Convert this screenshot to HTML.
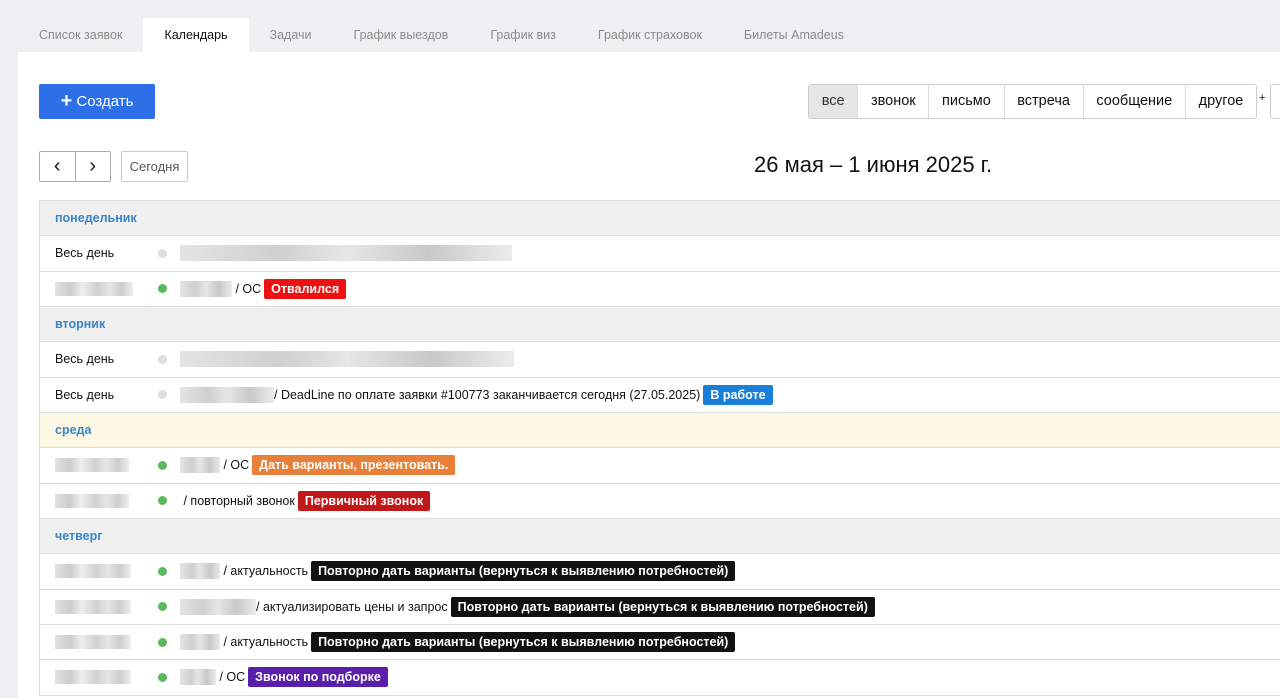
<!DOCTYPE html>
<html><head><meta charset="utf-8"><style>
*{box-sizing:border-box;margin:0;padding:0}
body{width:1280px;height:698px;overflow:hidden;background:#f0f0f3;font-family:"Liberation Sans",Arial,sans-serif;font-size:12.5px;color:#111;position:relative}
.tabs{position:absolute;top:18px;left:18px;height:34px;display:flex}
.tab{padding:0 21px;line-height:34px;color:#8a8a8a;font-size:12.5px}
.tab.act{background:#fff;color:#111;padding:0 21px}
.main{position:absolute;left:18px;top:52px;right:0;bottom:0;background:#fff}
.create{position:absolute;left:39px;top:84px;width:116px;height:35px;background:#2d6fe8;border-radius:2px;color:#fff;font-size:15px;line-height:35px;text-align:center}
.create b{font-size:20px;font-weight:bold;vertical-align:-1px}
.seg{position:absolute;left:808px;top:84px;width:449px;height:35px;display:flex;border:1px solid #ccc;border-radius:3px;overflow:hidden}
.seg div{flex:auto;text-align:center;line-height:33px;font-size:14.5px;border-left:1px solid #ddd;color:#111}
.seg div:first-child{border-left:none;background:#e6e6e6;color:#333}
.plus{position:absolute;left:1259px;top:92px;font-size:11px}
.box2{position:absolute;left:1270px;top:84px;width:20px;height:35px;border:1px solid #ccc;border-radius:3px}
.nav{position:absolute;left:39px;top:151px;width:72px;height:31px;border:1px solid #aaa;border-radius:2px;display:flex}
.nav div{flex:1;text-align:center;line-height:28px;font-size:20px}
.nav div+div{border-left:1px solid #aaa}
.today{position:absolute;left:121px;top:151px;width:67px;height:31px;border:1px solid #ccc;border-radius:2px;line-height:29px;text-align:center;color:#555;font-size:13px}
.title{position:absolute;left:754px;top:152px;font-size:22px;color:#111}
.tbl{position:absolute;left:39px;top:200px;right:0;border-left:1px solid #ddd;border-top:1px solid #ddd}
.r{height:35.33px;border-bottom:1px solid #ddd;position:relative;display:flex;align-items:center}
.h{background:#f0f0f0;color:#3a85c8;font-weight:bold;padding-left:15px}
.h.y{background:#fdf8e3}
.t{position:absolute;left:15px}
.dot{position:absolute;left:118px;width:9px;height:9px;border-radius:50%;background:#ddd}
.dot.g{background:#5cb85c}
.c{position:absolute;left:140px;display:flex;align-items:center;white-space:nowrap}
.bl{display:inline-block;height:16px;background:linear-gradient(90deg,#e4e4e4,#cfcfcf 30%,#e6e6e6 50%,#c8c8c8 75%,#ececec)}
.tb{display:inline-block;height:14px;width:78px;background:linear-gradient(90deg,#e2e2e2,#cccccc 20%,#eee 35%,#d0d0d0 55%,#e6e6e6 70%,#cdcdcd 85%,#eee)}
.lb{color:#fff;font-weight:bold;font-size:12.5px;padding:0 7px;height:20px;line-height:20px;border-radius:2px;margin-left:3px}
</style></head><body>
<div class="tabs"><div class="tab">Список заявок</div><div class="tab act">Календарь</div><div class="tab">Задачи</div><div class="tab">График выездов</div><div class="tab">График виз</div><div class="tab">График страховок</div><div class="tab">Билеты Amadeus</div></div>
<div class="main"></div>
<div class="create"><b>+</b> Создать</div>
<div class="seg"><div>все</div><div>звонок</div><div>письмо</div><div>встреча</div><div>сообщение</div><div>другое</div></div>
<div class="plus">+</div><div class="box2"></div>
<div class="nav"><div>&#8249;</div><div>&#8250;</div></div>
<div class="today">Сегодня</div>
<div class="title">26 мая – 1 июня 2025 г.</div>
<div class="tbl">
<div class="r h">понедельник</div>
<div class="r"><span class="t">Весь день</span><span class="dot"></span><span class="c"><span class="bl" style="width:332px"></span></span></div>
<div class="r"><span class="t tb"></span><span class="dot g"></span><span class="c"><span class="bl" style="width:52px"></span>&nbsp;/ ОС <span class="lb" style="background:#ee1111">Отвалился</span></span></div>
<div class="r h">вторник</div>
<div class="r"><span class="t">Весь день</span><span class="dot"></span><span class="c"><span class="bl" style="width:334px"></span></span></div>
<div class="r"><span class="t">Весь день</span><span class="dot"></span><span class="c"><span class="bl" style="width:94px"></span>/ DeadLine по оплате заявки #100773 заканчивается сегодня (27.05.2025) <span class="lb" style="background:#1a7fd9">В работе</span></span></div>
<div class="r h y">среда</div>
<div class="r"><span class="t tb" style="width:74px"></span><span class="dot g"></span><span class="c"><span class="bl" style="width:40px"></span>&nbsp;/ ОС <span class="lb" style="background:#e8803a">Дать варианты, презентовать.</span></span></div>
<div class="r"><span class="t tb" style="width:74px"></span><span class="dot g"></span><span class="c">&nbsp;/ повторный звонок <span class="lb" style="background:#c01818">Первичный звонок</span></span></div>
<div class="r h">четверг</div>
<div class="r"><span class="t tb" style="width:76px"></span><span class="dot g"></span><span class="c"><span class="bl" style="width:40px"></span>&nbsp;/ актуальность <span class="lb" style="background:#111">Повторно дать варианты (вернуться к выявлению потребностей)</span></span></div>
<div class="r"><span class="t tb" style="width:76px"></span><span class="dot g"></span><span class="c"><span class="bl" style="width:76px"></span>/ актуализировать цены и запрос <span class="lb" style="background:#111">Повторно дать варианты (вернуться к выявлению потребностей)</span></span></div>
<div class="r"><span class="t tb" style="width:76px"></span><span class="dot g"></span><span class="c"><span class="bl" style="width:40px"></span>&nbsp;/ актуальность <span class="lb" style="background:#111">Повторно дать варианты (вернуться к выявлению потребностей)</span></span></div>
<div class="r"><span class="t tb" style="width:76px"></span><span class="dot g"></span><span class="c"><span class="bl" style="width:36px"></span>&nbsp;/ ОС <span class="lb" style="background:#5a1fa8">Звонок по подборке</span></span></div>
</div>
</body></html>
